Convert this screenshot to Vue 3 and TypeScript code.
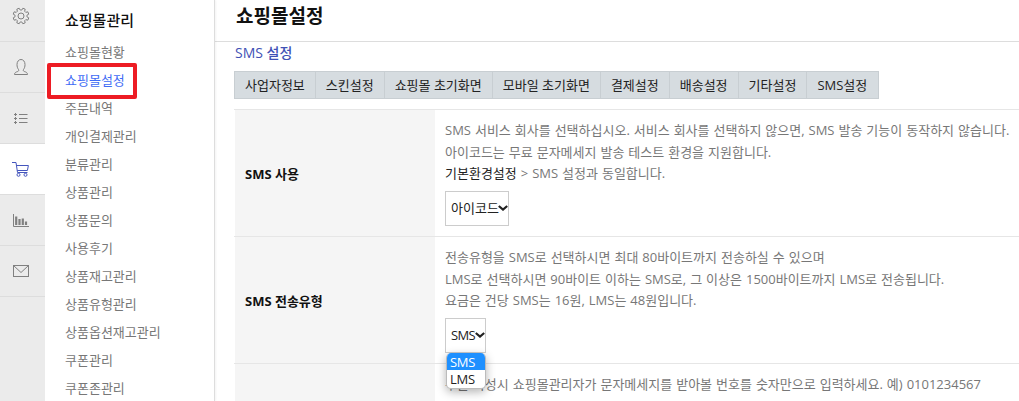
<script setup lang="ts">
const menu: string[] = ['쇼핑몰현황','쇼핑몰설정','주문내역','개인결제관리','분류관리','상품관리','상품문의','사용후기','상품재고관리','상품유형관리','상품옵션재고관리','쿠폰관리','쿠폰존관리'];
const tabs: string[] = ['사업자정보','스킨설정','쇼핑몰 초기화면','모바일 초기화면','결제설정','배송설정','기타설정','SMS설정'];

function gearPath(): string {
  const c = 9;
  const pt = (r: number, deg: number): string => {
    const a = (deg * Math.PI) / 180;
    return `${(c + r * Math.cos(a)).toFixed(2)} ${(c + r * Math.sin(a)).toFixed(2)}`;
  };
  let d = '';
  for (let i = 0; i < 8; i++) {
    const a = i * 45 + 22.5;
    d += `${i === 0 ? 'M' : 'L'}${pt(6, a - 15)} L${pt(8, a - 9)} L${pt(8, a + 9)} L${pt(6, a + 15)} `;
  }
  return d + 'Z';
}
const gear = gearPath();
</script>

<template>
  <div class="page">
    <nav class="rail">
      <div class="rail-item">
        <svg width="18" height="18" viewBox="0 0 18 18" fill="none" stroke="#808080" stroke-width="1" stroke-linejoin="round"><path :d="gear"/><circle cx="9" cy="9" r="3"/></svg>
      </div>
      <div class="rail-item">
        <svg width="14" height="16" viewBox="0 0 14 16" fill="none" stroke="#808080" stroke-width="1"><path d="M.5 15.500c0-2 1.600-2.500 3.200-3 1-.4 1.300-1.300.8-2C3.500 9.200 3 7.600 3 5.500 3 2.600 4.700.5 7 .5s4 2.100 4 5c0 2.100-.5 3.700-1.500 5-.5.7-.2 1.600.8 2 1.600.5 3.200 1 3.200 3z"/></svg>
      </div>
      <div class="rail-item">
        <svg width="14" height="11" viewBox="0 0 14 11" fill="none" stroke="#808080" stroke-width="1"><path d="M5 1.500h8.500M5 5.500h8.500M5 9.500h8.500" stroke-width="1.200"/><path d="M0 1.500h3M1.500 0v3M0 5.500h3M1.500 4v3M0 9.500h3M1.500 8v3"/></svg>
      </div>
      <div class="rail-item">
        <svg width="17" height="15" viewBox="0 0 17 15" fill="none" stroke="#4556bd" stroke-width="1"><path d="M0 .5h4l1.500 10h10M4.400 3.500h12l-1 5H5.200"/><circle cx="6.500" cy="12.800" r="1.500"/><circle cx="13.500" cy="12.800" r="1.500"/></svg>
      </div>
      <div class="rail-item">
        <svg width="16" height="13" viewBox="0 0 16 13" fill="none" stroke="#808080"><path d="M.5 0v12.500H16"/><path stroke-width="2.200" d="M3.200 2.500v8.500M6.500 5v6M9.800 4.500V11M13 7.500V11"/></svg>
      </div>
      <div class="rail-item">
        <svg width="16" height="12" viewBox="0 0 16 12" fill="none" stroke="#808080" stroke-width="1"><rect x=".5" y=".5" width="15" height="11"/><path d="M.5 .5 8 7.500 15.500 .5"/></svg>
      </div>
    </nav>

    <aside class="side">
      <h2 class="side-title">쇼핑몰관리</h2>
      <ul class="side-list">
        <li v-for="(m, i) in menu" :key="m" :class="{ active: i === 1 }">{{ m }}</li>
      </ul>
      <div class="marker"></div>
    </aside>

    <main class="main">
      <header class="head"><h1>쇼핑몰설정</h1></header>
      <div class="body">
        <h3 class="sub">SMS 설정</h3>
        <div class="tabs">
          <a v-for="t in tabs" :key="t">{{ t }}</a>
        </div>
        <div class="table">
          <div class="row">
            <div class="th">SMS 사용</div>
            <div class="td">
              <p>SMS 서비스 회사를 선택하십시오. 서비스 회사를 선택하지 않으면, SMS 발송 기능이 동작하지 않습니다.</p>
              <p>아이코드는 무료 문자메세지 발송 테스트 환경을 지원합니다.</p>
              <p><b>기본환경설정</b> &gt; SMS 설정과 동일합니다.</p>
              <select class="sel wide"><option>아이코드</option></select>
            </div>
          </div>
          <div class="row">
            <div class="th">SMS 전송유형</div>
            <div class="td">
              <p>전송유형을 SMS로 선택하시면 최대 80바이트까지 전송하실 수 있으며</p>
              <p>LMS로 선택하시면 90바이트 이하는 SMS로, 그 이상은 1500바이트까지 LMS로 전송됩니다.</p>
              <p>요금은 건당 SMS는 16원, LMS는 48원입니다.</p>
              <div class="sel-wrap">
                <select class="sel narrow"><option>SMS</option><option>LMS</option></select>
                <ul class="drop">
                  <li class="hi">SMS</li>
                  <li>LMS</li>
                </ul>
              </div>
            </div>
          </div>
          <div class="row">
            <div class="th"></div>
            <div class="td">
              <p>주문 작성시 쇼핑몰관리자가 문자메세지를 받아볼 번호를 숫자만으로 입력하세요. 예) 0101234567</p>
            </div>
          </div>
        </div>
      </div>
    </main>
  </div>
</template>

<style>
html, body { margin: 0; overflow: hidden; background: #fff; }
</style>

<style scoped>
.page {
  display: flex;
  width: 1019px;
  height: 401px;
  overflow: hidden;
  font-family: "Open Sans", "Noto Sans CJK KR", sans-serif;
  font-size: 13px;
  color: #777;
}
.rail { width: 45px; flex: none; background: #ebebeb; }
.rail-item {
  height: 50px;
  border-bottom: 1px solid #ddd;
  display: flex;
  align-items: center;
  justify-content: center;
  padding-right: 4px;
}
.rail-item:first-child { height: 32px; padding-bottom: 9px; }
.rail-item:nth-child(4) { background: #fff; }
.side {
  position: relative;
  flex: none;
  border-right: 1px solid #ddd;
  box-shadow: 1px 0 2px rgba(0,0,0,.05);
  padding-left: 20px;
  box-sizing: border-box;
  width: 170px;
}
.side-title { margin: 0; padding-top: 10px; height: 28px; font-size: 15px; line-height: 20px; font-weight: 500; color: #111; }
.side-list { list-style: none; margin: 0; padding: 0; }
.side-list li { height: 28px; line-height: 28px; font-size: 13px; color: #777; }
.side-list li.active { color: #3f6cf5; }
.marker {
  position: absolute;
  left: 2px;
  top: 63px;
  width: 90px;
  height: 36px;
  border: 4px solid #ed1c24;
  border-radius: 2px;
  box-sizing: border-box;
}
.main { flex: 1; min-width: 0; }
.head { height: 41px; border-bottom: 1px solid #ddd; padding-left: 21px; }
.head h1 { margin: 0; font-size: 19px; line-height: 32px; font-weight: 700; color: #111; }
.body { padding: 0 0 0 19px; }
.sub { margin: 0; font-size: 14px; line-height: 22px; font-weight: 500; color: #3f51b5; height: 29px; padding-left: 1px; box-sizing: border-box; }
.tabs { display: inline-flex; vertical-align: top; border: 1px solid #c8ced2; background: #d6dce0; height: 28px; box-sizing: border-box; }
.tabs a { padding: 0 10px; line-height: 26px; font-size: 13px; color: #222; border-right: 1px solid #c8ced2; white-space: nowrap; }
.tabs a:last-child { border-right: 0; padding-right: 11px; }
.table { margin-top: 10px; border-top: 1px solid #e6e6e6; }
.row { display: flex; border-bottom: 1px solid #e6e6e6; height: 126px; }
.th { width: 200px; flex: none; background: #f5f5f5; padding-left: 10px; box-sizing: border-box; display: flex; align-items: center; font-weight: 700; font-size: 13px; color: #111; margin-left: 1px; }
.td { padding: 10px 0 0 10px; flex: 1; white-space: nowrap; word-spacing: .6px; }
.td p { margin: 0; line-height: 21.6px; }
.td b { font-weight: 400; color: #222; }
.sel {
  display: block;
  appearance: none;
  margin-top: 6px;
  height: 35px;
  border: 1px solid #ccc;
  border-radius: 0;
  background: #fff url("data:image/svg+xml,%3Csvg xmlns='http://www.w3.org/2000/svg' width='10' height='6'%3E%3Cpath d='M.8 1 5 4.600 9.200 1' fill='none' stroke='%23222' stroke-width='2.200'/%3E%3C/svg%3E") no-repeat right 0 center;
  font: inherit;
  color: #222;
  padding: 0 0 0 5px;
  box-sizing: border-box;
}
.sel.wide { width: 64px; }
.sel.narrow { width: 41px; letter-spacing: -.6px; }
.sel-wrap { position: relative; }
.drop {
  position: absolute;
  left: 1px;
  top: 35px;
  width: 40px;
  margin: 0;
  padding: 0;
  list-style: none;
  background: #fff;
  border: 1px solid #bbb;
  border-top: 0;
  border-radius: 5px;
  overflow: hidden;
  box-shadow: 0 3px 10px rgba(0,0,0,.3);
  color: #222;
  box-sizing: border-box;
}
.drop li { padding-left: 3px; height: 17.5px; line-height: 18px; letter-spacing: -.3px; }
.drop li.hi { background: #1e90ff; color: #fff; }
</style>
